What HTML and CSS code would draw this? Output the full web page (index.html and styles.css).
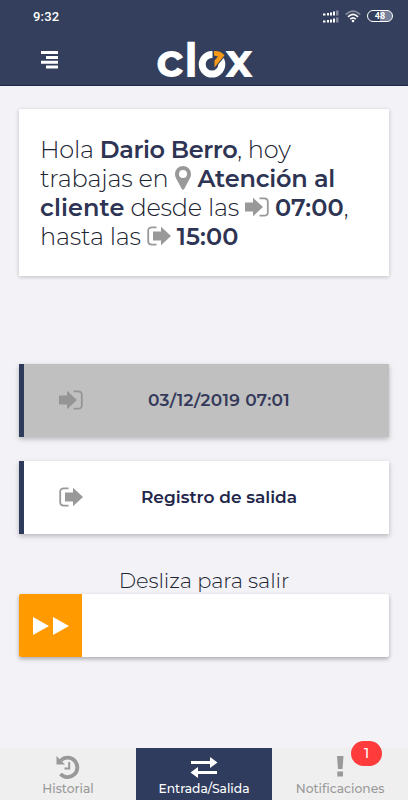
FILE: index.html
```
<!DOCTYPE html>
<html lang="es">
<head>
  <meta charset="UTF-8" />
  <meta name="viewport" content="width=device-width, initial-scale=1.0" />
  <title>Clox</title>
  <link rel="stylesheet" href="styles.css">
</head>
<body>
  <svg class="defs" width="0" height="0">
    <symbol id="entrar" viewBox="0 0 24 20">
      <path d="M0 5.500h8V.8L18 10l-10 9.200v-4.700H0z" fill="currentColor"/>
      <path d="M14.500 1.300H19q3.800 0 3.800 3.500v10.400q0 3.500-3.800 3.500h-4.500" fill="none" stroke="currentColor" stroke-width="1.800"/>
    </symbol>
    <symbol id="salir" viewBox="0 0 24 20">
      <path d="M6 5.500h8V.8L24 10l-10 9.200v-4.700H6z" fill="currentColor"/>
      <path d="M9.500 1.300H5Q1.200 1.300 1.200 5v10q0 3.700 3.800 3.700h4.500" fill="none" stroke="currentColor" stroke-width="1.800"/>
    </symbol>
  </svg>

  <header>
    <div class="estado">
      <span class="hora">9:32</span>
      <svg class="senal" width="16" height="13" viewBox="0 0 16 13">
        <g fill="#fff">
          <path d="M0 3.500h2.500v2H0zM4 3h2v2.500H4zM7 2.500h2v3H7zM10 1.500h2v4h-2zM0 10.500h2.500v2H0zM4 10h2v2.500H4zM7 9.500h2v3H7zM10 8.500h2v4h-2z"/>
          <path d="M13 .5h2.500v5H13zM13 7.500h2.500v5H13z" opacity=".4"/>
        </g>
      </svg>
      <svg class="wifi" width="16" height="13" viewBox="0 0 16 13" fill="none" stroke="#fff" stroke-width="1.600">
        <path d="M.8 4.600Q8-2.400 15.200 4.600" opacity=".4"/>
        <path d="M3 6.800Q8 2 13 6.800M5.200 9.100Q8 6.500 10.800 9.100"/>
        <circle cx="8" cy="11" r="1.300" fill="#fff" stroke="none"/>
      </svg>
      <span class="bateria">48</span>
    </div>
    <div class="barra">
      <svg class="menu" width="17" height="18" viewBox="0 0 17 18">
        <path d="M0 0h17v3H0zM5 5h12v3H5zM0 9.800h17v3H0zM5 14.500h12v3H5z" fill="#fff"/>
      </svg>
      <svg class="logo" width="98" height="40" viewBox="0 0 98 40">
        <text x="-2" y="37">c</text>
        <text x="26" y="37">l</text>
        <circle cx="54" cy="24.300" r="9.800" fill="none" stroke="#fff" stroke-width="7"/>
        <path d="M54.500 24V9h7l7 5.500L56.500 29z" fill="#333f5c"/>
        <path d="M56 11q6.500-.5 10.500 4.300L56.500 27.500V20.500l3.500-4-4-1z" fill="#f79a17"/>
        <text x="67" y="37">x</text>
      </svg>
    </div>
  </header>

  <main>
    <section class="saludo">
      <div>Hola <b class="nombre">Dario Berro</b>, hoy</div>
      <div>trabajas en
        <svg class="pin" width="16" height="24" viewBox="0 0 16 24"><path fill-rule="evenodd" d="M8 0a8 8 0 0 1 8 8q0 2-.8 3.700L9.500 22.500q-1.500 2.500-3 0L.8 11.700Q0 10 0 8a8 8 0 0 1 8-8zm0 4a4 4 0 1 0 0 8 4 4 0 0 0 0-8z" fill="currentColor"/></svg>
        <b class="puesto">Atención al</b></div>
      <div><b>cliente</b> desde las <svg class="icono" width="24" height="20"><use href="#entrar"/></svg> <b>07:00</b>,</div>
      <div>hasta las <svg class="icono" width="24" height="20"><use href="#salir"/></svg> <b>15:00</b></div>
    </section>

    <div class="registro hecho">
      <svg class="icono" width="24" height="20"><use href="#entrar"/></svg>
      <span class="fecha">03/12/2019 07:01</span>
    </div>
    <div class="registro">
      <svg class="icono" width="24" height="20"><use href="#salir"/></svg>
      <span>Registro de salida</span>
    </div>

    <p class="ayuda">Desliza para salir</p>
    <div class="deslizar">
      <div class="tirador">
        <svg width="36" height="18" viewBox="0 0 36 18"><path d="M0 0l16 9-16 9zM20 0l16 9-16 9z" fill="#fff"/></svg>
      </div>
    </div>
  </main>

  <nav>
    <a class="tab">
      <svg width="24" height="24" viewBox="0 0 24 24" fill="none" stroke="currentColor">
        <path d="M4.800 5.500A9.700 9.700 0 1 1 4.500 19" stroke-width="3.800"/>
        <path d="M.5 1v8.500H9z" fill="currentColor" stroke="none"/>
        <path d="M13.200 7v6.500H8.500" stroke-width="2"/>
      </svg>
      <span>Historial</span>
    </a>
    <a class="tab activa">
      <svg width="28" height="24" viewBox="0 0 28 24" fill="none" stroke="currentColor" stroke-width="3">
        <path d="M1 7.500h20M7 17.500h20"/>
        <path d="M20 2 27.500 7.500 20 13zM8 12 .5 17.500 8 23z" fill="currentColor" stroke="none"/>
      </svg>
      <span>Entrada/Salida</span>
    </a>
    <a class="tab">
      <svg width="24" height="24" viewBox="0 0 24 24" fill="currentColor">
        <path d="M9 1h6.500l-1 13H10zM9.300 16.500h5.700v5H9.300z"/>
      </svg>
      <span>Notificaciones</span>
      <i class="badge">1</i>
    </a>
  </nav>
</body>
</html>
```
FILE: styles.css
```
* {
  box-sizing: border-box;
}
body {
  margin: 0;
  height: 800px;
  display: flex;
  flex-direction: column;
  background: #f2f2f7;
  color: #202331;
  font-family: Montserrat, Inter, sans-serif;
  overflow: hidden;
}
.defs {
  position: absolute;
}
header {
  height: 86px;
  background: #333f5c;
  border-bottom: 1px solid #1b2a49;
  color: #fff;
}
.estado {
  display: flex;
  align-items: center;
  height: 32px;
  padding: 0 15px 0 33px;
}
.hora {
  flex: 1;
  font: 500 13px Roboto, sans-serif;
  letter-spacing: 0.2px;
}
.wifi {
  margin: 0 6px 0 6px;
}
.bateria {
  width: 26px;
  height: 12px;
  border: 1px solid #fff;
  border-radius: 6px;
  background: linear-gradient(to right, #333f5c 50%, #77809a 50%);
  font: 700 9px/10px Roboto, sans-serif;
  text-align: center;
}
.barra {
  display: flex;
  padding: 8px 0 0 41px;
}
.menu {
  margin-top: 11px;
}
.logo {
  margin-left: 100px;
  overflow: visible;
}
.logo text {
  font: 700 47px Montserrat, Inter, sans-serif;
  fill: #fff;
}
main {
  flex: 1;
  padding: 23px 19px 0;
}
.saludo {
  height: 167px;
  padding: 26px 21px 24px;
  background: #fff;
  box-shadow: 0 1px 4px rgba(0,0,0,0.22);
  font-size: 24px;
  font-weight: 300;
  letter-spacing: -0.2px;
  line-height: 29px;
  white-space: nowrap;
}
.saludo div {
  height: 29px;
}
b {
  font-weight: 600;
  color: #2e3453;
  letter-spacing: 0.1px;
}
.nombre {
  letter-spacing: -0.4px;
}
.puesto {
  letter-spacing: -0.2px;
}
.pin, .icono {
  color: #999;
}
.saludo svg {
  vertical-align: -1px;
}
.saludo .pin {
  vertical-align: -3px;
  margin-right: 1px;
}
.registro {
  display: flex;
  align-items: center;
  height: 73px;
  margin-top: 24px;
  padding-left: 35px;
  background: #fff;
  border-left: 5px solid #2e3b5b;
  box-shadow: 0 2px 5px rgba(0,0,0,0.25);
  color: #22264a;
  font-size: 17px;
  font-weight: 600;
}
.registro span {
  flex: 1;
  padding: 0 34px 1px 0;
  text-align: center;
}
.registro .icono {
  margin-bottom: 1px;
}
.hecho {
  margin-top: 88px;
  background: #c0c0c0;
  color: #34395a;
}
.hecho .icono {
  color: #959595;
}
.hecho .fecha {
  letter-spacing: 0.3px;
}
.ayuda {
  margin: 34px 0 0;
  font-size: 21px;
  font-weight: 300;
  letter-spacing: -0.1px;
  line-height: 26px;
  text-align: center;
}
.deslizar {
  height: 63px;
  background: #fff;
  border-radius: 2px;
  box-shadow: 0 2px 4px rgba(0,0,0,0.3);
}
.tirador {
  display: flex;
  align-items: center;
  justify-content: center;
  width: 63px;
  height: 63px;
  background: #ff9a00;
  border-radius: 2px 0 0 2px;
}
nav {
  display: grid;
  grid-template-columns: 1fr 1fr 1fr;
  height: 52px;
  background: #efefef;
}
.tab {
  position: relative;
  display: flex;
  flex-direction: column;
  align-items: center;
  padding-top: 7px;
  color: #999;
  font-size: 12.300px;
  font-weight: 500;
  line-height: 19px;
}
.activa {
  background: #303c5e;
  color: #fff;
}
.badge {
  position: absolute;
  top: -7px;
  right: 26px;
  width: 31px;
  height: 25px;
  border-radius: 13px;
  background: #ff3b3b;
  color: #fff;
  font-size: 14px;
  font-style: normal;
  line-height: 25px;
  text-align: center;
}
```
